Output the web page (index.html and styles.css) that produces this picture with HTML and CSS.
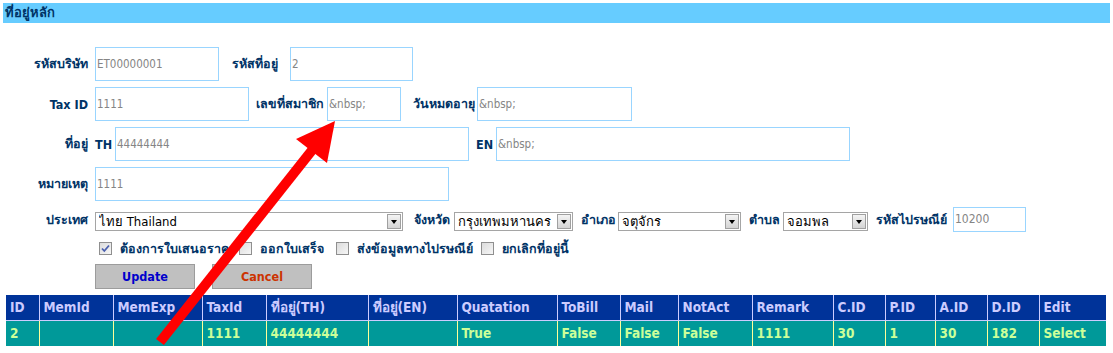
FILE: index.html
```html
<!DOCTYPE html>
<html lang="th">
<head>
<meta charset="utf-8">
<title>ที่อยู่หลัก</title>
<link rel="stylesheet" href="styles.css">
</head>
<body>
<div class="page">
  <div class="title">ที่อยู่หลัก</div>
  <div class="form">
    <div class="row">
      <span class="lbl first">รหัสบริษัท</span>
      <span class="inp w124">ET00000001</span>
      <span class="lbl box b71 p13">รหัสที่อยู่</span>
      <span class="inp w123">2</span>
    </div>
    <div class="row">
      <span class="lbl first">Tax ID</span>
      <span class="inp w154">1111</span>
      <span class="lbl box b78 p7">เลขที่สมาชิก</span>
      <span class="inp w74">&amp;nbsp;</span>
      <span class="lbl box b76 p12">วันหมดอายุ</span>
      <span class="inp w155">&amp;nbsp;</span>
    </div>
    <div class="row">
      <span class="lbl first">ที่อยู่</span>
      <span class="lbl box b20">TH</span>
      <span class="inp w354">44444444</span>
      <span class="lbl box b27 p7">EN</span>
      <span class="inp w354">&amp;nbsp;</span>
    </div>
    <div class="row">
      <span class="lbl first">หมายเหตุ</span>
      <span class="inp w354">1111</span>
    </div>
    <div class="row row-sel">
      <span class="lbl first">ประเทศ</span>
      <span class="sel s308"><span class="sel-text">ไทย Thailand</span><span class="sel-btn"></span></span>
      <span class="lbl box b51 p11">จังหวัด</span>
      <span class="sel s119"><span class="sel-text">กรุงเทพมหานคร</span><span class="sel-btn"></span></span>
      <span class="lbl box b45 p8">อำเภอ</span>
      <span class="sel s123"><span class="sel-text">จตุจักร</span><span class="sel-btn"></span></span>
      <span class="lbl box b42 p8">ตำบล</span>
      <span class="sel s85"><span class="sel-text">จอมพล</span><span class="sel-btn"></span></span>
      <span class="lbl box b85 p8">รหัสไปรษณีย์</span>
      <span class="inp post">10200</span>
    </div>
    <div class="row row-chk">
      <span class="chk"><svg viewBox="0 0 13 13" width="13" height="13"><path d="M3 6.5 L5.3 9 L10 3.5" fill="none" stroke="#4a5fae" stroke-width="1.8"/></svg></span>
      <span class="chk-text t119">ต้องการใบเสนอราคา</span>
      <span class="chk"></span>
      <span class="chk-text t76">ออกใบเสร็จ</span>
      <span class="chk"></span>
      <span class="chk-text t124">ส่งข้อมูลทางไปรษณีย์</span>
      <span class="chk"></span>
      <span class="chk-text">ยกเลิกที่อยู่นี้</span>
    </div>
    <div class="row row-btn">
      <span class="btn upd">Update</span>
      <span class="btn can">Cancel</span>
    </div>
  </div>
  <table class="grid">
    <colgroup>
      <col class="c33"><col class="c74"><col class="c89"><col class="c64"><col class="c102"><col class="c89"><col class="c100"><col class="c63"><col class="c58"><col class="c74"><col class="c81"><col class="c52"><col class="c50"><col class="c52"><col class="c52"><col class="c67">
    </colgroup>
    <thead>
      <tr><th>ID</th><th>MemId</th><th>MemExp</th><th>TaxId</th><th>ที่อยู่(TH)</th><th>ที่อยู่(EN)</th><th>Quatation</th><th>ToBill</th><th>Mail</th><th>NotAct</th><th>Remark</th><th>C.ID</th><th>P.ID</th><th>A.ID</th><th>D.ID</th><th>Edit</th></tr>
    </thead>
    <tbody>
      <tr><td>2</td><td></td><td></td><td>1111</td><td>44444444</td><td></td><td>True</td><td>False</td><td>False</td><td>False</td><td>1111</td><td>30</td><td>1</td><td>30</td><td>182</td><td>Select</td></tr>
    </tbody>
  </table>
</div>
<svg class="arrow" width="1113" height="353" viewBox="0 0 1113 353">
  <line x1="160" y1="342" x2="313" y2="149" stroke="#ff0000" stroke-width="10"/>
  <polygon points="335,121 296,139 327,163" fill="#ff0000"/>
</svg>
</body>
</html>
```
FILE: styles.css
```css
html, body {
  margin: 0;
  padding: 0;
  background: #ffffff;
}
body {
  font-family: "DejaVu Sans Condensed", "DejaVu Sans", "Noto Sans", sans-serif;
  font-stretch: condensed;
  position: relative;
  width: 1113px;
  height: 353px;
  overflow: hidden;
}
.page {
  padding: 3px 3px 0 3px;
}
.title {
  height: 20px;
  line-height: 20px;
  background: #66ccff;
  color: #003366;
  font-weight: bold;
  font-size: 13px;
  padding-left: 2px;
}
.form {
  padding-top: 24px;
}
.row {
  display: flex;
  align-items: center;
  height: 34px;
  margin-bottom: 6px;
}
.lbl {
  color: #003366;
  font-weight: bold;
  font-size: 12.5px;
  white-space: nowrap;
}
.lbl.first {
  width: 85px;
  text-align: right;
  margin-right: 7px;
}
.lbl.box {
  box-sizing: border-box;
  flex: 0 0 auto;
}
.b20 { width: 20px; }
.b27 { width: 27px; }
.b42 { width: 42px; }
.b45 { width: 45px; }
.b51 { width: 51px; }
.b71 { width: 71px; }
.b76 { width: 76px; }
.b78 { width: 78px; }
.b85 { width: 85px; }
.p7 { padding-left: 7px; }
.p8 { padding-left: 8px; }
.p11 { padding-left: 11px; }
.p12 { padding-left: 12px; }
.p13 { padding-left: 13px; }

.inp {
  box-sizing: border-box;
  flex: 0 0 auto;
  height: 34px;
  border: 1px solid #99d5ff;
  color: #858585;
  font-size: 11.5px;
  line-height: 32px;
  padding-left: 1px;
  white-space: nowrap;
  overflow: hidden;
}
.w74 { width: 74px; }
.w123 { width: 123px; }
.w124 { width: 124px; }
.w154 { width: 154px; }
.w155 { width: 155px; }
.w354 { width: 354px; }

.row-sel {
  height: 25px;
  margin-bottom: 0;
}
.inp.post {
  width: 73px;
  height: 25px;
  line-height: 23px;
  font-size: 12px;
}
.sel {
  box-sizing: border-box;
  flex: 0 0 auto;
  height: 19px;
  margin-top: 4px;
  border: 1px solid #a5a5a5;
  display: flex;
  align-items: center;
  justify-content: space-between;
  background: #ffffff;
  color: #000000;
  font-size: 13px;
  padding-left: 3px;
  padding-right: 1px;
  white-space: nowrap;
}
.sel-text {
  overflow: hidden;
}
.sel-btn {
  flex: 0 0 auto;
  box-sizing: border-box;
  width: 14px;
  height: 15px;
  border: 1px solid #a0a0a0;
  background: linear-gradient(#f4f4f4, #d4d4d4);
  position: relative;
}
.sel-btn::after {
  content: "";
  position: absolute;
  left: 3px;
  top: 5px;
  border-left: 3.5px solid transparent;
  border-right: 3.5px solid transparent;
  border-top: 4px solid #000000;
}
.s308 { width: 308px; }
.s119 { width: 119px; }
.s123 { width: 123px; }
.s85 { width: 85px; }

.row-chk {
  margin-top: 10px;
  height: 13px;
  margin-bottom: 0;
  padding-left: 96px;
}
.chk {
  box-sizing: border-box;
  width: 13px;
  height: 13px;
  border: 1px solid #8f8f8f;
  background: linear-gradient(135deg, #dcdcdc, #f6f6f6);
  flex: 0 0 auto;
  display: flex;
}
.chk svg { margin: -1px; }
.chk-text {
  box-sizing: border-box;
  flex: 0 0 auto;
  color: #003366;
  font-weight: bold;
  font-size: 12.5px;
  padding-left: 8px;
  white-space: nowrap;
}
.t76 { width: 84px; }
.t119 { width: 127px; }
.t124 { width: 132px; }

.row-btn {
  margin-top: 9px;
  height: 25px;
  margin-bottom: 0;
  padding-left: 92px;
}
.btn {
  box-sizing: border-box;
  width: 100px;
  height: 25px;
  line-height: 23px;
  text-align: center;
  background: #c0c0c0;
  border: 1px solid #9c9c9c;
  font-weight: bold;
  font-size: 12.5px;
}
.btn.upd { color: #0000cc; }
.btn.can { color: #cc3300; margin-left: 17px; }

.grid {
  margin-top: 6px;
  margin-left: 3px;
  width: 1100px;
  table-layout: fixed;
  border-collapse: collapse;
  font-size: 13.5px;
  font-weight: bold;
}
.c33 { width: 33px; }
.c74 { width: 74px; }
.c89 { width: 89px; }
.c64 { width: 64px; }
.c102 { width: 102px; }
.c100 { width: 100px; }
.c63 { width: 63px; }
.c58 { width: 58px; }
.c81 { width: 81px; }
.c52 { width: 52px; }
.c50 { width: 50px; }
.c67 { width: 67px; }
.grid th {
  height: 25px;
  box-sizing: border-box;
  padding: 0 0 0 4px;
  text-align: left;
  background: #003399;
  color: #ccccff;
  border: 1px solid #ccccff;
  border-top: none;
  white-space: nowrap;
  overflow: hidden;
}
.grid td {
  height: 26px;
  box-sizing: border-box;
  padding: 0 0 0 4px;
  background: #009999;
  color: #ccff99;
  border: 1px solid #ffff99;
  border-bottom: none;
  white-space: nowrap;
  overflow: hidden;
}
.grid tr th:first-child, .grid tr td:first-child { border-left: none; }
.grid tr th:last-child, .grid tr td:last-child { border-right: none; }
.grid thead th { border-bottom: 1px solid #ccccff; }

.arrow {
  position: absolute;
  left: 0;
  top: 0;
  pointer-events: none;
}
```
